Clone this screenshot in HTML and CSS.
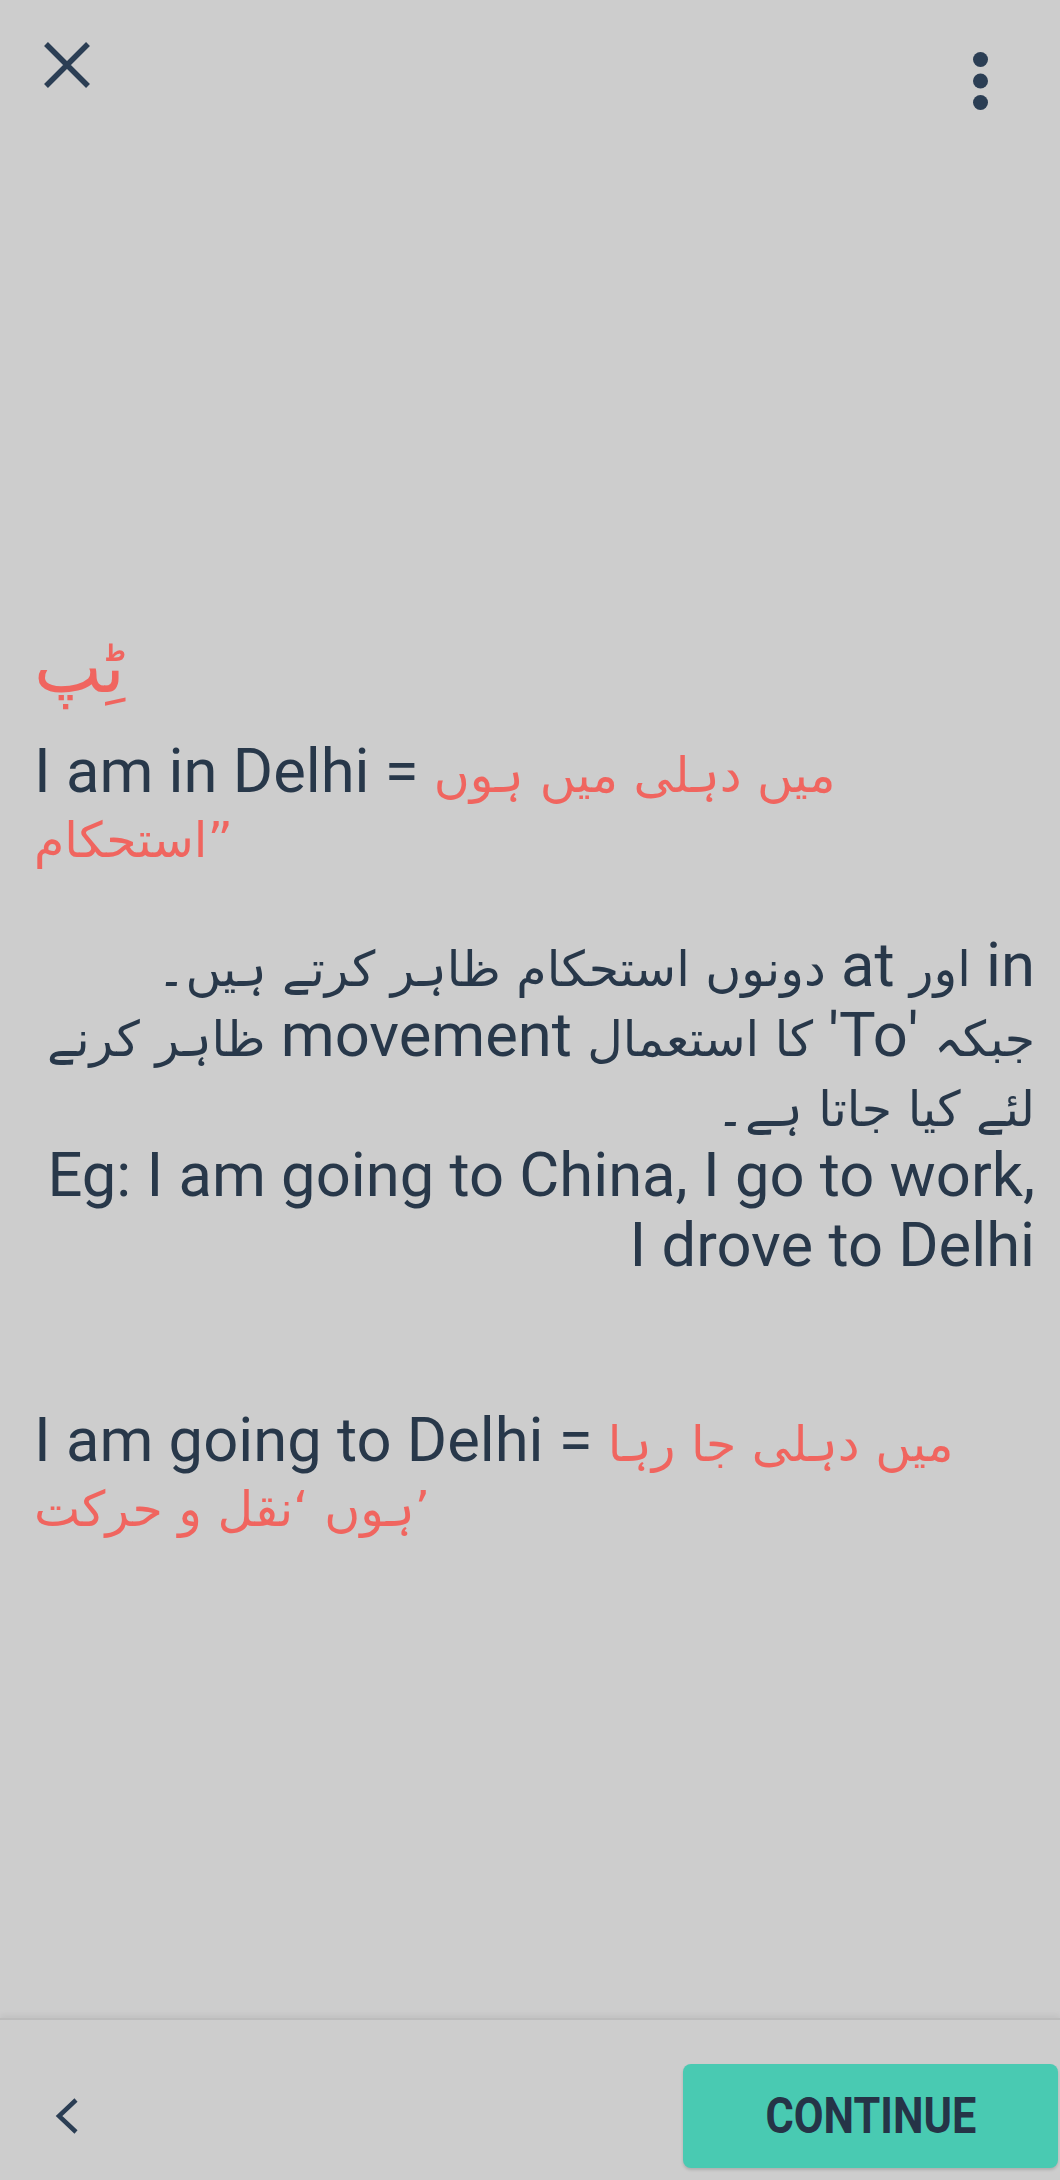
FILE: index.html
```html
<!DOCTYPE html>
<html lang="ur">
<head>
<meta charset="utf-8">
<title>Tip</title>
<link rel="stylesheet" href="styles.css">
</head>
<body>
<div class="screen">
  <header class="topbar">
    <button class="icon-btn close-btn" aria-label="Close">
      <svg width="50" height="50" viewBox="0 0 50 50"><path d="M4 4 L46 46 M46 4 L4 46" stroke="#2b3e54" stroke-width="5.5" fill="none"/></svg>
    </button>
    <button class="icon-btn more-btn" aria-label="More">
      <svg width="15" height="58" viewBox="0 0 15 58"><circle cx="7.5" cy="7.5" r="7.5" fill="#2b3e54"/><circle cx="7.5" cy="29" r="7.5" fill="#2b3e54"/><circle cx="7.5" cy="50.5" r="7.5" fill="#2b3e54"/></svg>
    </button>
  </header>

  <main class="content">
    <h1 class="tip-title" dir="rtl">ٹِپ</h1>

    <p class="pair">I am in Delhi = <span class="ur red">میں دہلی میں ہوں<br>استحکام”</span></p>

    <div class="rtl-block" dir="rtl">
      <div class="rline">in <span class="ur">اور</span> at <span class="ur">دونوں استحکام ظاہر کرتے ہیں۔</span></div>
      <div class="rline"><span class="ur">جبکہ</span> 'To' <span class="ur">کا استعمال</span> movement <span class="ur">ظاہر کرنے</span></div>
      <div class="rline"><span class="ur">لئے کیا جاتا ہے۔</span></div>
      <div class="rline"><span dir="ltr">Eg: I am going to China, I go to work,</span></div>
      <div class="rline">I drove to Delhi</div>
    </div>

    <p class="pair pair-last">I am going to Delhi = <span class="ur red">میں دہلی جا رہا<br>ہوں ‘نقل و حرکت’</span></p>
  </main>

  <footer class="bottombar">
    <button class="icon-btn back-btn" aria-label="Back">
      <svg width="40" height="40" viewBox="0 0 40 40"><path d="M30 4 L13 20 L30 36" stroke="#2b3e54" stroke-width="4.5" fill="none"/></svg>
    </button>
    <button class="continue-btn"><span class="continue-label">CONTINUE</span></button>
  </footer>
</div>
</body>
</html>
```

FILE: styles.css
```css
html, body {
  margin: 0;
  padding: 0;
  background: #cdcdcd;
}

.screen {
  width: 1060px;
  height: 2180px;
  display: flex;
  flex-direction: column;
  background: #cdcdcd;
  font-family: Roboto, "DejaVu Sans", sans-serif;
  color: #28384a;
  overflow: hidden;
}

.icon-btn {
  border: 0;
  background: transparent;
  padding: 0;
  margin: 0;
  display: block;
  line-height: 0;
}

.topbar {
  height: 130px;
  display: flex;
  justify-content: space-between;
  align-items: flex-start;
  padding: 0 72px 0 42px;
  flex: none;
}

.close-btn {
  margin-top: 40px;
}

.more-btn {
  margin-top: 52px;
}

.content {
  flex: 1;
  display: flex;
  flex-direction: column;
  padding: 502px 25px 0 34px;
  font-size: 61.5px;
}

.tip-title {
  margin: 0;
  font-family: "DejaVu Sans", sans-serif;
  font-weight: normal;
  font-size: 72px;
  line-height: 70px;
  color: #f0655f;
  text-align: left;
}

.pair {
  margin: 37px 0 0 0;
  line-height: 65px;
  direction: ltr;
  text-align: left;
}

.pair-last {
  margin-top: 128px;
}

.ur {
  font-family: "DejaVu Sans", sans-serif;
  font-size: 49px;
  line-height: 1;
}

.red {
  color: #f0655f;
}

.rtl-block {
  margin-top: 61px;
  line-height: 70px;
  text-align: right;
}

.rline {
  white-space: nowrap;
}

.bottombar {
  flex: none;
  height: 108px;
  padding: 42px 2px 10px 46px;
  border-top: 2px solid #bcbcbc;
  box-shadow: 0 -3px 6px rgba(0, 0, 0, 0.06);
  display: flex;
  justify-content: space-between;
  align-items: center;
}

.continue-btn {
  width: 375px;
  height: 104px;
  border: 0;
  border-radius: 8px;
  background: #49cab2;
  box-shadow: 0 2px 3px rgba(0, 0, 0, 0.15);
  display: flex;
  align-items: center;
  justify-content: center;
  padding: 0;
}

.continue-label {
  font-family: Roboto, sans-serif;
  font-weight: bold;
  font-size: 50px;
  color: #253447;
  display: inline-block;
  transform: scaleX(0.865);
  letter-spacing: 0;
}
```
